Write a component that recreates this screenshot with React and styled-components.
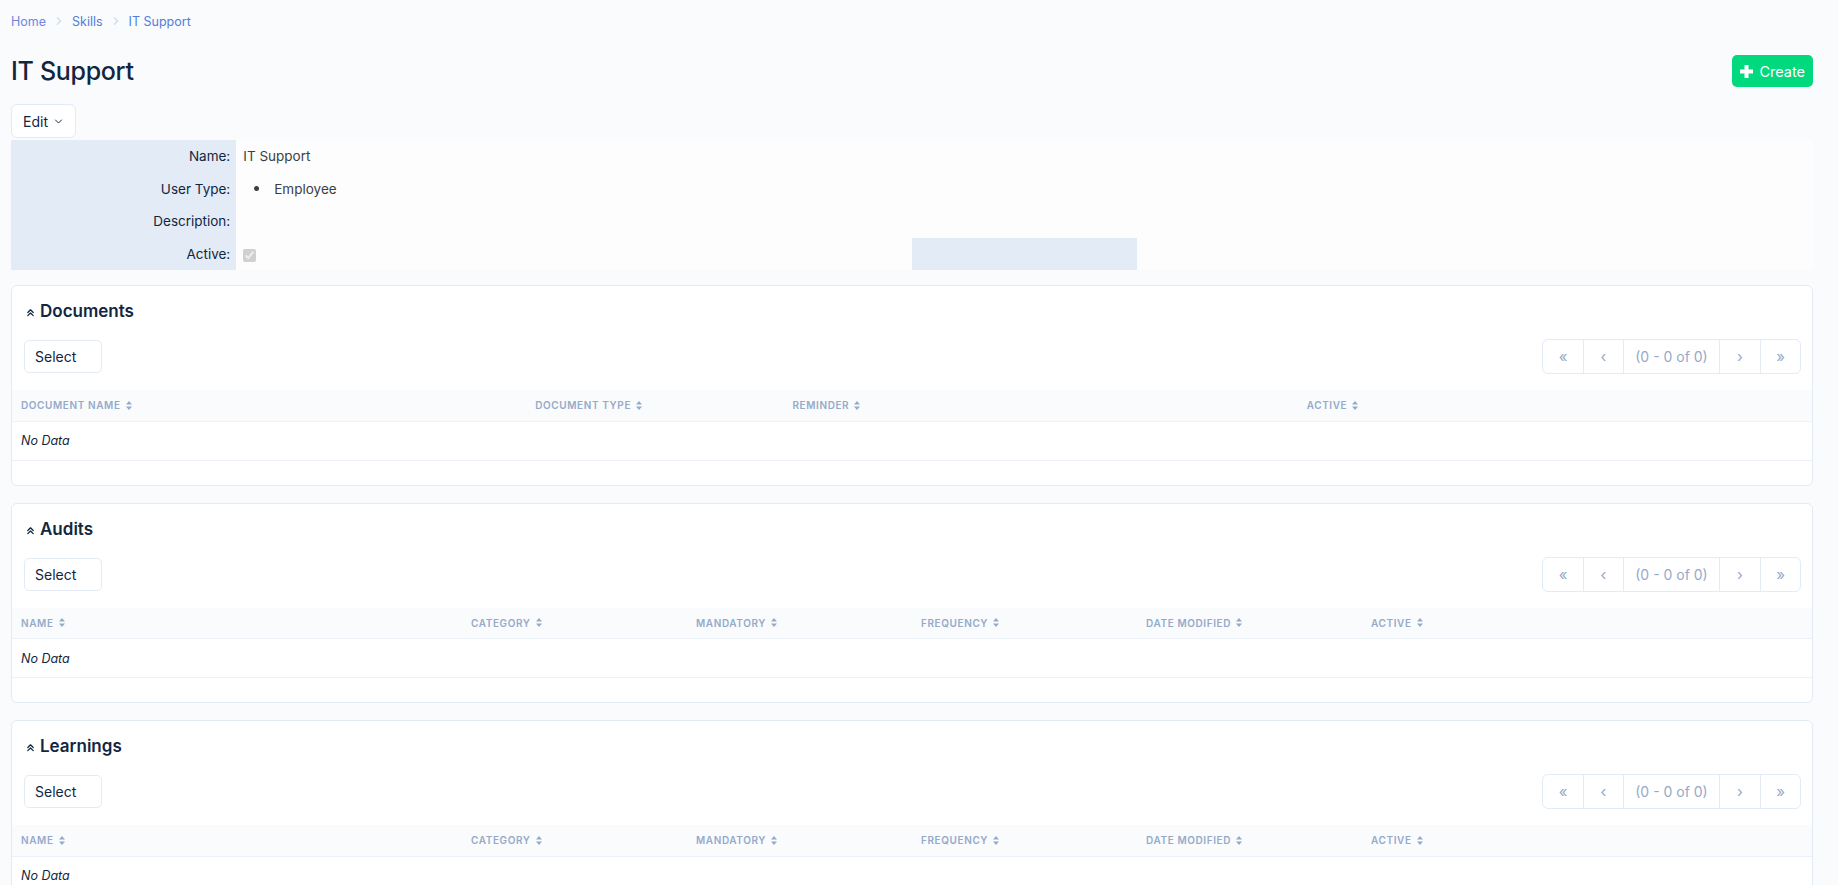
import React from "react";
import styled, { createGlobalStyle } from "styled-components";

const GlobalStyle = createGlobalStyle`
  html, body {
    margin: 0;
    padding: 0;
    background: #f9fbfd;
    font-family: Inter, "Noto Sans", sans-serif;
    color: #12263f;
  }
  * { box-sizing: border-box; }
`;

const sections = [
  {
    title: "Documents",
    columns: [
      { label: "Document Name", width: "28.57%" },
      { label: "Document Type", width: "14.29%" },
      { label: "Reminder", width: "28.57%" },
      { label: "Active", width: "28.57%" },
    ],
  },
  {
    title: "Audits",
    columns: [
      { label: "Name", width: "25%" },
      { label: "Category", width: "12.5%" },
      { label: "Mandatory", width: "12.5%" },
      { label: "Frequency", width: "12.5%" },
      { label: "Date Modified", width: "12.5%" },
      { label: "Active", width: "25%" },
    ],
  },
  {
    title: "Learnings",
    columns: [
      { label: "Name", width: "25%" },
      { label: "Category", width: "12.5%" },
      { label: "Mandatory", width: "12.5%" },
      { label: "Frequency", width: "12.5%" },
      { label: "Date Modified", width: "12.5%" },
      { label: "Active", width: "25%" },
    ],
  },
];

function Chevron({ dir = "right", size = 10, color = "#d2ddec", stroke = 1.6 }) {
  const paths = {
    right: "M4 2 L8 6 L4 10",
    down: "M2 4 L6 8 L10 4",
    left: "M8 2 L4 6 L8 10",
  };
  return (
    <svg width={size} height={size} viewBox="0 0 12 12" fill="none">
      <path d={paths[dir]} stroke={color} strokeWidth={stroke} strokeLinecap="round" strokeLinejoin="round" />
    </svg>
  );
}

function DoubleUp() {
  return (
    <svg width="9" height="9" viewBox="0 0 10 10" fill="none">
      <path d="M2 5 L5 2 L8 5 M2 8.5 L5 5.5 L8 8.5" stroke="#12263f" strokeWidth="1.4" strokeLinecap="round" strokeLinejoin="round" />
    </svg>
  );
}

function SortIcon() {
  return (
    <svg width="6" height="9" viewBox="0 0 6 9">
      <path d="M3 0 L6 3.4 H0 Z M3 9 L0 5.6 H6 Z" fill="#95aac9" />
    </svg>
  );
}

function PlusIcon() {
  return (
    <svg width="13" height="13" viewBox="0 0 13 13">
      <path d="M4.5 0 H8.5 V4.5 H13 V8.5 H8.5 V13 H4.5 V8.5 H0 V4.5 H4.5 Z" fill="#ffffff" />
    </svg>
  );
}

export default function App() {
  return (
    <Page>
      <GlobalStyle />
      <Breadcrumb>
        <Crumb $first>Home</Crumb>
        <Chevron />
        <Crumb>Skills</Crumb>
        <Chevron />
        <Crumb>IT Support</Crumb>
      </Breadcrumb>

      <HeaderRow>
        <Title>IT Support</Title>
        <CreateButton>
          <PlusIcon />
          Create
        </CreateButton>
      </HeaderRow>

      <EditButton>
        Edit
        <Chevron dir="down" size={9} color="#12263f" stroke={1.3} />
      </EditButton>

      <InfoTable>
        <colgroup>
          <col style={{ width: "12.5%" }} />
          <col style={{ width: "37.5%" }} />
          <col style={{ width: "12.5%" }} />
          <col style={{ width: "37.5%" }} />
        </colgroup>
        <tbody>
          <tr>
            <LabelCell>Name:</LabelCell>
            <ValueCell colSpan={3}>IT Support</ValueCell>
          </tr>
          <tr>
            <LabelCell>User Type:</LabelCell>
            <ValueCell colSpan={3}>
              <Bullets>
                <li>Employee</li>
              </Bullets>
            </ValueCell>
          </tr>
          <tr>
            <LabelCell>Description:</LabelCell>
            <ValueCell colSpan={3}></ValueCell>
          </tr>
          <tr>
            <LabelCell>Active:</LabelCell>
            <ValueCell>
              <Check type="checkbox" checked disabled readOnly />
            </ValueCell>
            <LabelCell></LabelCell>
            <ValueCell></ValueCell>
          </tr>
        </tbody>
      </InfoTable>

      <Sections>
        {sections.map((s) => (
          <Card key={s.title}>
            <CardTitle>
              <DoubleUp />
              {s.title}
            </CardTitle>
            <Toolbar>
              <SelectButton>Select</SelectButton>
              <Pager>
                <PageBtn>«</PageBtn>
                <PageBtn>‹</PageBtn>
                <PageInfo>(0 - 0 of 0)</PageInfo>
                <PageBtn>›</PageBtn>
                <PageBtn>»</PageBtn>
              </Pager>
            </Toolbar>
            <DataTable>
              <colgroup>
                {s.columns.map((c) => (
                  <col key={c.label} style={{ width: c.width }} />
                ))}
              </colgroup>
              <thead>
                <tr>
                  {s.columns.map((c) => (
                    <Th key={c.label}>
                      <ThInner>
                        {c.label}
                        <SortIcon />
                      </ThInner>
                    </Th>
                  ))}
                </tr>
              </thead>
              <tbody>
                <tr>
                  <EmptyCell colSpan={s.columns.length}>No Data</EmptyCell>
                </tr>
              </tbody>
            </DataTable>
          </Card>
        ))}
      </Sections>
    </Page>
  );
}

const Page = styled.div`
  padding: 12px 25px 40px 11px;
  min-height: 100vh;
`;

const Breadcrumb = styled.nav`
  display: flex;
  align-items: center;
  gap: 8px;
  height: 18px;
  font-size: 12.5px;
`;

const Crumb = styled.span`
  color: ${(p) => (p.$first ? "#6f86df" : "#4f7fd9")};
`;

const HeaderRow = styled.div`
  display: flex;
  align-items: center;
  justify-content: space-between;
  margin-top: 25px;
  height: 32px;
`;

const Title = styled.h1`
  margin: 0;
  font-size: 25px;
  font-weight: 500;
  letter-spacing: -0.3px;
  color: #12263f;
`;

const CreateButton = styled.button`
  display: flex;
  align-items: center;
  gap: 6px;
  height: 32px;
  padding: 0 8px;
  border: none;
  border-radius: 5px;
  background: #00d97e;
  color: #ffffff;
  font-family: inherit;
  font-size: 14.5px;
`;

const EditButton = styled.button`
  display: flex;
  align-items: center;
  gap: 6px;
  margin-top: 17px;
  height: 34px;
  padding: 0 12px 0 11px;
  background: #ffffff;
  border: 1px solid #e3ebf6;
  border-radius: 6px;
  font-family: inherit;
  font-size: 14px;
  color: #12263f;
`;

const InfoTable = styled.table`
  width: 100%;
  margin-top: 2px;
  border-collapse: collapse;
  table-layout: fixed;
  font-size: 13.5px;
  tr {
    height: 32.5px;
  }
`;

const LabelCell = styled.td`
  background: #e3ebf6;
  text-align: right;
  padding: 0 6px 0 0;
  color: #12263f;
`;

const ValueCell = styled.td`
  background: #fdfdfd;
  padding: 0 7px;
  color: #3b3f45;
`;

const Bullets = styled.ul`
  margin: 0;
  padding-left: 31px;
  list-style: none;
  li {
    position: relative;
  }
  li::before {
    content: "";
    position: absolute;
    left: -20px;
    top: 50%;
    width: 5px;
    height: 5px;
    margin-top: -3px;
    border-radius: 50%;
    background: #3b3f45;
  }
`;

const Check = styled.input`
  margin: 0;
  width: 13px;
  height: 13px;
  vertical-align: middle;
`;

const Sections = styled.div`
  display: flex;
  flex-direction: column;
  gap: 17px;
  margin-top: 15px;
`;

const Card = styled.section`
  background: #ffffff;
  border: 1px solid #e3ebf6;
  border-radius: 6px;
  padding-bottom: 24px;
`;

const CardTitle = styled.h2`
  display: flex;
  align-items: baseline;
  gap: 5px;
  margin: 0;
  padding: 15px 13px 0 14px;
  height: 38px;
  font-size: 17px;
  font-weight: 600;
  color: #12263f;
`;

const Toolbar = styled.div`
  display: flex;
  align-items: center;
  justify-content: space-between;
  margin-top: 15px;
  padding: 0 11px 0 12px;
`;

const SelectButton = styled.button`
  height: 33px;
  width: 78px;
  padding: 0 10px;
  text-align: left;
  background: #ffffff;
  border: 1px solid #e3ebf6;
  border-radius: 5px;
  font-family: inherit;
  font-size: 14px;
  color: #12263f;
`;

const Pager = styled.div`
  display: flex;
  height: 35px;
  border: 1px solid #e3ebf6;
  border-radius: 6px;
  overflow: hidden;
  background: #ffffff;
`;

const PageBtn = styled.div`
  display: flex;
  align-items: center;
  justify-content: center;
  width: 40px;
  color: #95aac9;
  font-size: 15px;
  & + & {
    border-left: 1px solid #e3ebf6;
  }
`;

const PageInfo = styled.div`
  display: flex;
  align-items: center;
  justify-content: center;
  width: 97px;
  border-left: 1px solid #e3ebf6;
  border-right: 1px solid #e3ebf6;
  color: #95aac9;
  font-size: 14px;
`;

const DataTable = styled.table`
  width: 100%;
  margin-top: 16px;
  border-collapse: collapse;
  table-layout: fixed;
`;

const Th = styled.th`
  height: 31px;
  padding: 0 9px;
  background: #f9fbfd;
  border-bottom: 1px solid #edf2f9;
  text-align: left;
  font-size: 10px;
  font-weight: 600;
  letter-spacing: 0.06em;
  text-transform: uppercase;
  color: #95aac9;
`;

const ThInner = styled.span`
  display: inline-flex;
  align-items: center;
  gap: 5px;
`;

const EmptyCell = styled.td`
  height: 39px;
  padding: 0 9px;
  border-bottom: 1px solid #edf2f9;
  font-size: 12.5px;
  font-style: italic;
  color: #12263f;
`;
